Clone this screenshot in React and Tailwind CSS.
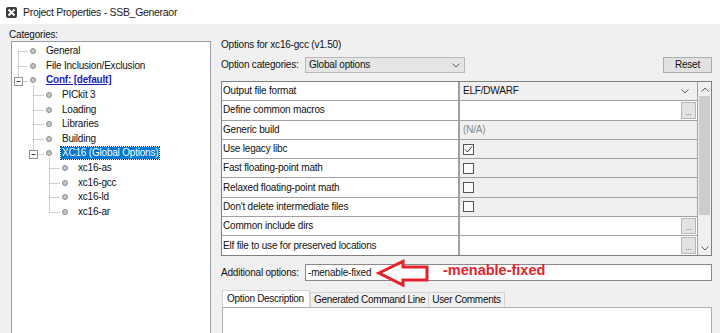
const tree = [
  { label: 'General', level: 0 },
  { label: 'File Inclusion/Exclusion', level: 0 },
  { label: 'Conf: [default]', level: 0, conf: true },
  { label: 'PICkit 3', level: 1 },
  { label: 'Loading', level: 1 },
  { label: 'Libraries', level: 1 },
  { label: 'Building', level: 1 },
  { label: 'XC16 (Global Options)', level: 1, selected: true },
  { label: 'xc16-as', level: 2 },
  { label: 'xc16-gcc', level: 2 },
  { label: 'xc16-ld', level: 2 },
  { label: 'xc16-ar', level: 2 },
];

const indent = ['pl-[18px]', 'pl-[34px]', 'pl-[50px]'];

const rows = [
  ['Output file format', 'select'],
  ['Define common macros', 'input'],
  ['Generic build', 'na'],
  ['Use legacy libc', 'checked'],
  ['Fast floating-point math', 'check'],
  ['Relaxed floating-point math', 'check'],
  ["Don't delete intermediate files", 'check'],
  ['Common include dirs', 'input'],
  ['Elf file to use for preserved locations', 'input'],
];

const rowY = (i) => 9.3 + 14.6 * i;

const Chevron = ({ up = false, className = '' }) => (
  <svg width="8" height="5" viewBox="0 0 8 5" className={className}>
    <path d={up ? 'M0.5 4.5 L4 1 L7.5 4.5' : 'M0.5 0.5 L4 4 L7.5 0.5'} fill="none" stroke="#606060" strokeWidth="1" />
  </svg>
);

const TreeLines = () => {
  const dot = { stroke: '#a0a0a0', strokeWidth: 1, strokeDasharray: '1 1' };
  const y = (i) => Math.round(rowY(i)) + 0.5;
  const h = (x1, x2, i) => <line key={`h${i}`} x1={x1} x2={x2} y1={y(i)} y2={y(i)} {...dot} />;
  const box = (cx, i) => (
    <g key={`b${i}`}>
      <rect x={cx - 4} y={y(i) - 4} width="8" height="8" fill="#fff" stroke="#919191" />
      <line x1={cx - 2} x2={cx + 2} y1={y(i)} y2={y(i)} stroke="#404040" />
    </g>
  );
  return (
    <svg className="absolute inset-0 pointer-events-none" width="198" height="300">
      <line x1="6.5" x2="6.5" y1={y(0)} y2={y(2) - 4} {...dot} />
      {h(6.5, 16, 0)}
      {h(6.5, 16, 1)}
      {h(10.5, 16, 2)}
      <line x1="21.5" x2="21.5" y1={y(2) + 4} y2={y(7) - 4} {...dot} />
      {[3, 4, 5, 6].map((i) => h(21.5, 32, i))}
      {h(25.5, 32, 7)}
      <line x1="37.5" x2="37.5" y1={y(7) + 4} y2={y(11)} {...dot} />
      {[8, 9, 10, 11].map((i) => h(37.5, 48, i))}
      {box(6.5, 2)}
      {box(21.5, 7)}
    </svg>
  );
};

const Bullet = () => (
  <span className="w-[6px] h-[6px] rounded-full bg-[#c4c4c4] border border-[#8c8c8c] shrink-0"></span>
);

const ValueCell = ({ kind }) => {
  if (kind === 'select')
    return (
      <div className="flex-1 flex items-center justify-between bg-[#f0f0f0] pl-[3px] pr-[8px]">
        <span>ELF/DWARF</span>
        <Chevron />
      </div>
    );
  if (kind === 'input')
    return (
      <div className="flex-1 flex bg-white">
        <div className="flex-1"></div>
        <div className="w-[15px] my-[1px] mr-[1px] bg-[#e3e3e3] border border-[#b5b5b5] flex items-end justify-center text-[8px] leading-[10px] text-[#555]">...</div>
      </div>
    );
  if (kind === 'na')
    return <div className="flex-1 flex items-center bg-[#f0f0f0] pl-[3px] text-[#8a8a8a]">(N/A)</div>;
  return (
    <div className="flex-1 flex items-center bg-[#f0f0f0] pl-[3px]">
      <span className="w-[11px] h-[11px] border border-[#555] bg-[#fafafa] flex items-center justify-center">
        {kind === 'checked' && (
          <svg width="9" height="9" viewBox="0 0 9 9">
            <path d="M1 4.5 L3.5 7 L8 1.5" fill="none" stroke="#333" strokeWidth="1" />
          </svg>
        )}
      </span>
    </div>
  );
};

export default function App() {
  return (
    <div className="w-[720px] h-[333px] overflow-hidden whitespace-nowrap bg-[#f0f0f0] text-[10px] leading-[12px] tracking-[-0.2px] text-[#111] font-['Liberation_Sans',sans-serif]">
      {/* title bar */}
      <div className="h-[24px] bg-white flex items-center pl-[6px] gap-[6px]">
        <svg width="11" height="11" viewBox="0 0 11 11">
          <rect x="0" y="0" width="11" height="11" rx="2" fill="#3c3c3c" />
          <path d="M2.5 2.5 L8.5 8.5 M8.5 2.5 L2.5 8.5" stroke="#fff" strokeWidth="2" />
        </svg>
        <span className="text-[10.5px] tracking-[-0.3px] text-[#1a1a1a]">Project Properties - SSB_Generaor</span>
      </div>

      <div className="flex">
        {/* categories */}
        <div className="ml-[9px] w-[202px] pt-[5px]">
          <div className="h-[12px]">Categories:</div>
          <div className="relative ml-[2px] w-[200px] h-[300px] bg-white border border-[#9a9da3] pt-[2px]">
            <TreeLines />
            {tree.map((t) => (
              <div key={t.label} className={`flex items-center h-[14.6px] gap-[9px] ${indent[t.level]}`}>
                <Bullet />
                <span
                  className={`px-[1px] ${t.conf ? 'font-bold text-[#1c1cb4] underline' : ''} ${
                    t.selected ? 'bg-[#0078d7] text-white outline outline-1 outline-dotted outline-[#0a3d6b]' : ''
                  }`}>
                  {t.label}
                </span>
              </div>
            ))}
          </div>
        </div>

        {/* options */}
        <div className="ml-[10px] w-[491px] pt-[15px] flex flex-col">
          <div className="h-[12px]">Options for xc16-gcc (v1.50)</div>

          <div className="mt-[6px] h-[16px] flex items-center">
            <span className="w-[84px]">Option categories:</span>
            <div className="w-[160px] h-[16px] bg-[#e5e5e5] border border-[#b8b8b8] flex items-center justify-between pl-[3px] pr-[4px]">
              <span>Global options</span>
              <Chevron />
            </div>
            <div className="ml-auto w-[49px] h-[16px] bg-[#e1e1e1] border border-[#adadad] flex items-center justify-center">Reset</div>
          </div>

          <div className="mt-[8px] h-[175px] flex border border-[#7f7f7f] bg-white overflow-hidden">
            <div className="flex-1 flex flex-col">
              {rows.map(([label, kind]) => (
                <div key={label} className="flex h-[19.3px] shrink-0 border-b border-[#a0a0a0]">
                  <div className="w-[238px] border-r-2 border-[#a0a0a0] pl-[1px] flex items-center bg-white">{label}</div>
                  <ValueCell kind={kind} />
                </div>
              ))}
            </div>
            <div className="w-[14px] bg-[#f0f0f0] border-l border-[#a0a0a0] flex flex-col">
              <div className="h-[14px] flex items-center justify-center">
                <Chevron up />
              </div>
              <div className="mx-[1px] h-[119px] bg-[#cdcdcd]"></div>
              <div className="flex-1"></div>
              <div className="h-[14px] flex items-center justify-center">
                <Chevron />
              </div>
            </div>
          </div>

          <div className="relative mt-[8px] h-[17px] flex items-center">
            <span className="w-[84px]">Additional options:</span>
            <div className="flex-1 h-[17px] bg-white border border-[#8a8a8a] flex items-center pl-[2px]">-menable-fixed</div>
            <svg className="absolute left-[155px] top-[-6px]" width="54" height="30" viewBox="376 258 54 30">
              <path d="M379 273 L403 261.5 L403 267 L427 267 L427 280 L403 280 L403 285 Z" fill="#fff" stroke="#e3222c" strokeWidth="3" strokeLinejoin="miter" />
            </svg>
            <span className="absolute left-[222px] top-[-1px] text-[14.5px] leading-[14.5px] tracking-normal font-bold text-[#e3222c]">
              -menable-fixed
            </span>
          </div>

          <div className="mt-[9px] flex items-end h-[17px] tracking-[-0.3px]">
            <div className="h-[17px] w-[88px] ml-[1px] bg-white border border-b-0 border-[#d4d4d4] flex items-center pl-[4px]">Option Description</div>
            <div className="h-[15px] bg-[#f0f0f0] border border-b-0 border-[#d4d4d4] flex items-center px-[3px]">Generated Command Line</div>
            <div className="h-[15px] -ml-px bg-[#f0f0f0] border border-b-0 border-[#d4d4d4] flex items-center px-[3px]">User Comments</div>
          </div>
          <div className="h-[40px] ml-[1px] bg-white border border-[#adadad]"></div>
        </div>
      </div>
    </div>
  );
}
